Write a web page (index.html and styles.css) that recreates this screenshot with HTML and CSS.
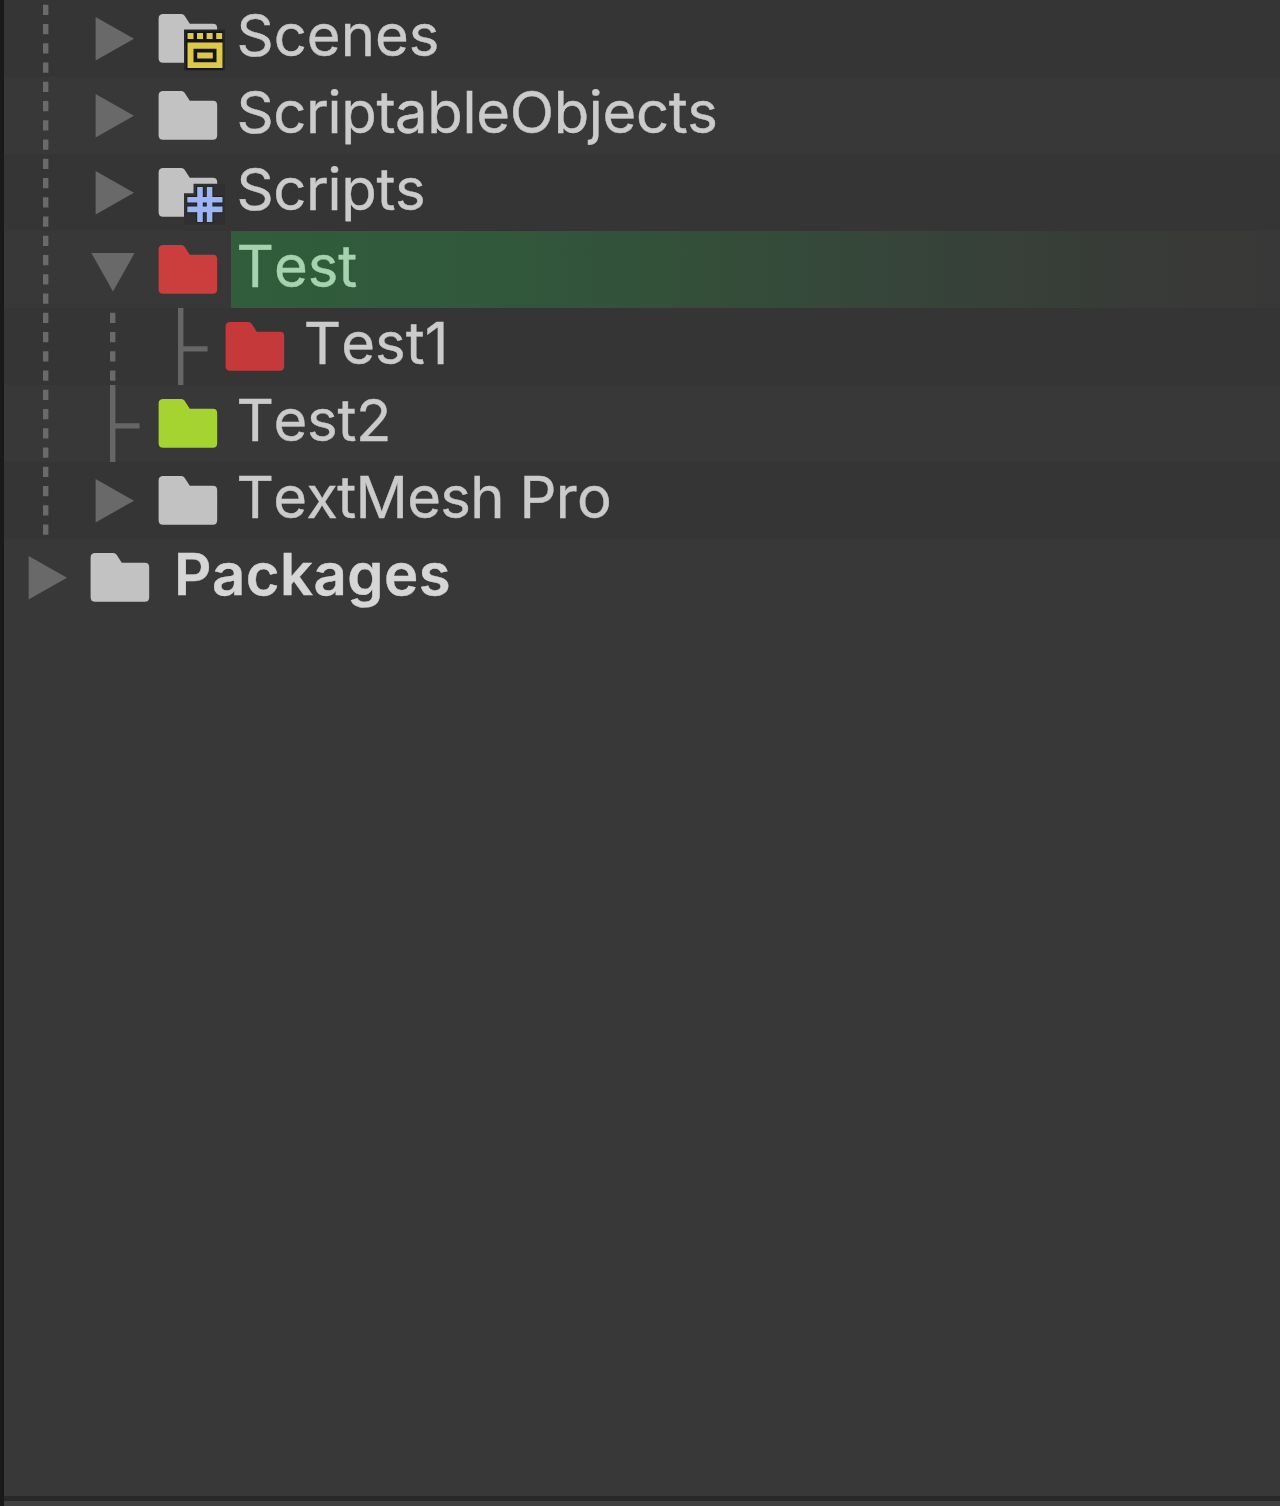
FILE: index.html
```html
<!DOCTYPE html>
<html lang="en">
<head>
<meta charset="utf-8">
<title>Project</title>
<link rel="stylesheet" href="styles.css">
</head>
<body>
<svg class="defs" width="0" height="0" aria-hidden="true">
  <symbol id="dash" viewBox="0 0 67.4 77"><path d="M33.7 4.7v77" stroke="#6a6a6a" stroke-width="5.4" stroke-dasharray="10.4 8.85"/></symbol>
  <symbol id="branch" viewBox="0 0 67.4 77"><path d="M31 0h5.4v38.2h24.2v5.2H36.4V77H31z" fill="#666"/></symbol>
  <symbol id="closed" viewBox="0 0 67.4 77"><path d="M16.6 17v43.4L55 38.7z" fill="#696969"/></symbol>
  <symbol id="open" viewBox="0 0 67.4 77"><path d="M12.4 22h43.2L34 60.4z" fill="#696969"/></symbol>
  <symbol id="folder" viewBox="0 0 84.2 77"><path d="M16.2 14h18.2q2 0 3.2 1.7l5.2 8.1h23q4.4 0 4.4 4.4v30q0 4.6-4.4 4.6H16.2q-4.6 0-4.6-4.6V18.6q0-4.6 4.6-4.6z" fill="currentColor"/></symbol>
</svg>
<main class="panel">
  <ul class="tree">
    <li class="row"><svg class="cell"><use href="#dash"/></svg><svg class="cell"><use href="#closed"/></svg><svg class="icon"><use href="#folder"/><path d="M37 29.5h41v41H37z" fill="#262626"/><path d="M39 31.5h37v38h-37z" fill="#14141c"/><path d="M40.5 33h6v6h-6zM50 33h6v6h-6zM59.6 33h6v6h-6zM69.2 33h6v6h-6z" fill="#ddc945"/><path d="M40.5 42.6h35V68h-35zM46.5 48.8v13.4h23V48.8zM50.2 52.4h15.6v6H50.2z" fill="#ddc945" fill-rule="evenodd"/></svg><span class="label scenes">Scenes</span></li>
    <li class="row"><svg class="cell"><use href="#dash"/></svg><svg class="cell"><use href="#closed"/></svg><svg class="icon"><use href="#folder"/></svg><span class="label objects">ScriptableObjects</span></li>
    <li class="row"><svg class="cell"><use href="#dash"/></svg><svg class="cell"><use href="#closed"/></svg><svg class="icon"><use href="#folder"/><path d="M46.5 29.8H78V71H37V39.3h9.5z" fill="#303030"/><path d="M53 32.4v36.2M62.6 32.4v36.2M39.7 45.8h36.4M39.7 55.4h36.4" stroke="#1d1d24" stroke-width="7.6"/><path d="M53 33v35M62.6 33v35M40.3 45.8h35.2M40.3 55.4h35.2" stroke="#9db4f5" stroke-width="5.6"/></svg><span class="label scripts">Scripts</span></li>
    <li class="row"><svg class="cell"><use href="#dash"/></svg><svg class="cell"><use href="#open"/></svg><svg class="icon red"><use href="#folder"/></svg><span class="label selected">Test</span></li>
    <li class="row"><svg class="cell"><use href="#dash"/></svg><svg class="cell"><use href="#dash"/></svg><svg class="cell"><use href="#branch"/></svg><svg class="icon crimson"><use href="#folder"/></svg><span class="label test1">Test1</span></li>
    <li class="row"><svg class="cell"><use href="#dash"/></svg><svg class="cell"><use href="#branch"/></svg><svg class="icon lime"><use href="#folder"/></svg><span class="label test2">Test2</span></li>
    <li class="row"><svg class="cell"><use href="#dash"/></svg><svg class="cell"><use href="#closed"/></svg><svg class="icon"><use href="#folder"/></svg><span class="label textmesh">TextMesh Pro</span></li>
    <li class="row"><svg class="cell"><use href="#closed"/></svg><svg class="icon"><use href="#folder"/></svg><span class="label root">Packages</span></li>
  </ul>
</main>
<footer class="bottom"></footer>
</body>
</html>
```
FILE: styles.css
```css
* { box-sizing: border-box; }
body {
  margin: 0;
  height: 1506px;
  display: flex;
  flex-direction: column;
  overflow: hidden;
  background: #383838;
  border-left: 4px solid #191919;
  font-family: Inter, "Liberation Sans", sans-serif;
  color: #cbcbcb;
}
.defs { display: none; }
.panel { flex: 1; }
.tree { margin: 0; padding: 0; list-style: none; }
.row {
  display: flex;
  height: 77px;
  padding-left: 8px;
}
.row:nth-child(odd) { background: #353535; }
.cell { flex: none; width: 67.4px; height: 77px; }
.icon { flex: none; width: 84.2px; height: 77px; color: #c2c2c2; }
.red { color: #cc3d3d; }
.crimson { color: #c5393b; }
.lime { color: #a5d32f; }
.label {
  flex: 1;
  padding-left: 5.5px;
  font-size: 58px;
  line-height: 71px;
  font-kerning: none;
  white-space: nowrap;
  -webkit-text-stroke: 0.4px currentColor;
}
.objects, .scripts { letter-spacing: -0.35px; }
.test2 { letter-spacing: -0.3px; }
.textmesh { letter-spacing: -0.7px; }
.selected {
  color: #a5d3b0;
  background: linear-gradient(90deg, #305d3b 0%, #31583b 25%, #344d39 48%, #36443a 65%, #383b37 85%, #383838 100%);
}
.root {
  padding-left: 10.5px;
  font-weight: 600;
  letter-spacing: 0.45px;
  color: #d6d6d6;
}
.bottom {
  height: 10px;
  border-top: 5px solid #282828;
  background: #404040;
}
```
